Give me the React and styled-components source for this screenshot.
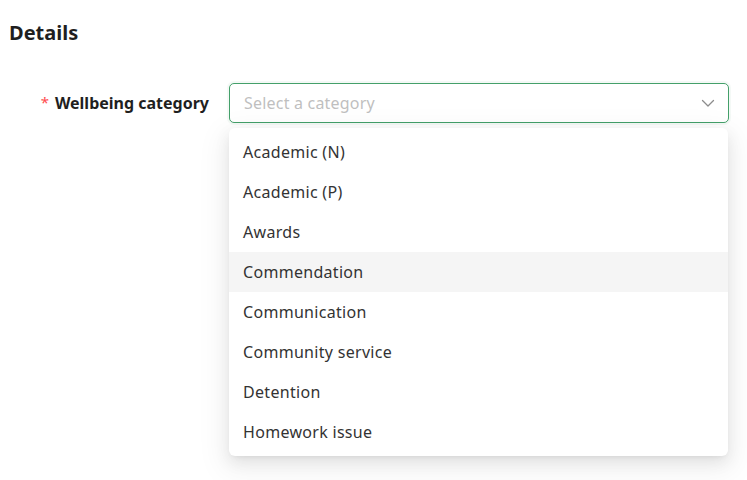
import React from 'react'
import styled, { createGlobalStyle } from 'styled-components'

const GlobalStyle = createGlobalStyle`
    html, body {
        margin: 0;
        padding: 0;
        background: #ffffff;
    }
    body {
        font-family: "Noto Sans", "Open Sans", sans-serif;
        color: #262626;
    }
`

const categories = [
    "Academic (N)",
    "Academic (P)",
    "Awards",
    "Commendation",
    "Communication",
    "Community service",
    "Detention",
    "Homework issue"
]

const ChevronDown = () => (
    <svg width="14" height="14" viewBox="0 0 14 14" fill="none">
        <path d="M1.5 4.5 L7 10 L12.5 4.5" stroke="#8c8c8c" strokeWidth="1.3" strokeLinecap="round" strokeLinejoin="round" />
    </svg>
)

const App = () => {
    const active = "Commendation"

    return (
        <Page>
            <GlobalStyle />

            <Heading>Details</Heading>

            <FormRow>
                <LabelCell>
                    <Required>*</Required>
                    <Label>Wellbeing category</Label>
                </LabelCell>

                <Field>
                    <SelectBox>
                        <Placeholder>Select a category</Placeholder>
                        <ArrowWrap>
                            <ChevronDown />
                        </ArrowWrap>
                    </SelectBox>

                    <Dropdown>
                        {categories.map(item => (
                            <Option key={item} $active={item === active}>
                                {item}
                            </Option>
                        ))}
                    </Dropdown>
                </Field>
            </FormRow>
        </Page>
    )
}

export default App



const Page = styled.div`
    width: 747px;
    height: 480px;
    padding: 20px 9px 0;
    box-sizing: border-box;
    overflow: hidden;
`

const Heading = styled.h2`
    margin: 0 0 37px;
    font-size: 20px;
    line-height: 26px;
    font-weight: 700;
    color: #1f1f1f;
`

const FormRow = styled.div`
    display: flex;
    align-items: flex-start;
`

const LabelCell = styled.div`
    width: 200px;
    height: 40px;
    display: flex;
    align-items: center;
    justify-content: flex-end;
    gap: 6px;
`

const Required = styled.span`
    color: #ff4d4f;
    font-size: 15px;
    line-height: 1;
    margin-top: -2px;
`

const Label = styled.label`
    font-size: 16px;
    font-weight: 700;
    color: #1f1f1f;
    white-space: nowrap;
`

const Field = styled.div`
    position: relative;
    width: 500px;
    margin-left: 20px;
`

const SelectBox = styled.div`
    height: 40px;
    box-sizing: border-box;
    border: 1px solid #44a06a;
    border-radius: 5px;
    background: #ffffff;
    box-shadow: 0 0 0 2px rgba(68, 160, 106, 0.06);
    display: flex;
    align-items: center;
    padding: 0 13px 0 14px;
`

const Placeholder = styled.span`
    flex: 1;
    font-size: 16px;
    letter-spacing: 0.2px;
    color: #bfbfbf;
`

const ArrowWrap = styled.span`
    display: flex;
    align-items: center;
`

const Dropdown = styled.ul`
    position: absolute;
    top: 45px;
    left: 0;
    right: 1px;
    margin: 0;
    padding: 4px 0;
    list-style: none;
    background: #ffffff;
    border-radius: 6px;
    box-shadow:
        0 6px 16px 0 rgba(0, 0, 0, 0.08),
        0 3px 6px -4px rgba(0, 0, 0, 0.12),
        0 9px 28px 8px rgba(0, 0, 0, 0.05);
`

const Option = styled.li`
    height: 40px;
    display: flex;
    align-items: center;
    padding: 0 14px;
    font-size: 16px;
    letter-spacing: 0.3px;
    color: #333333;
    background: ${({ $active }) => ($active ? '#f5f5f5' : 'transparent')};
`
